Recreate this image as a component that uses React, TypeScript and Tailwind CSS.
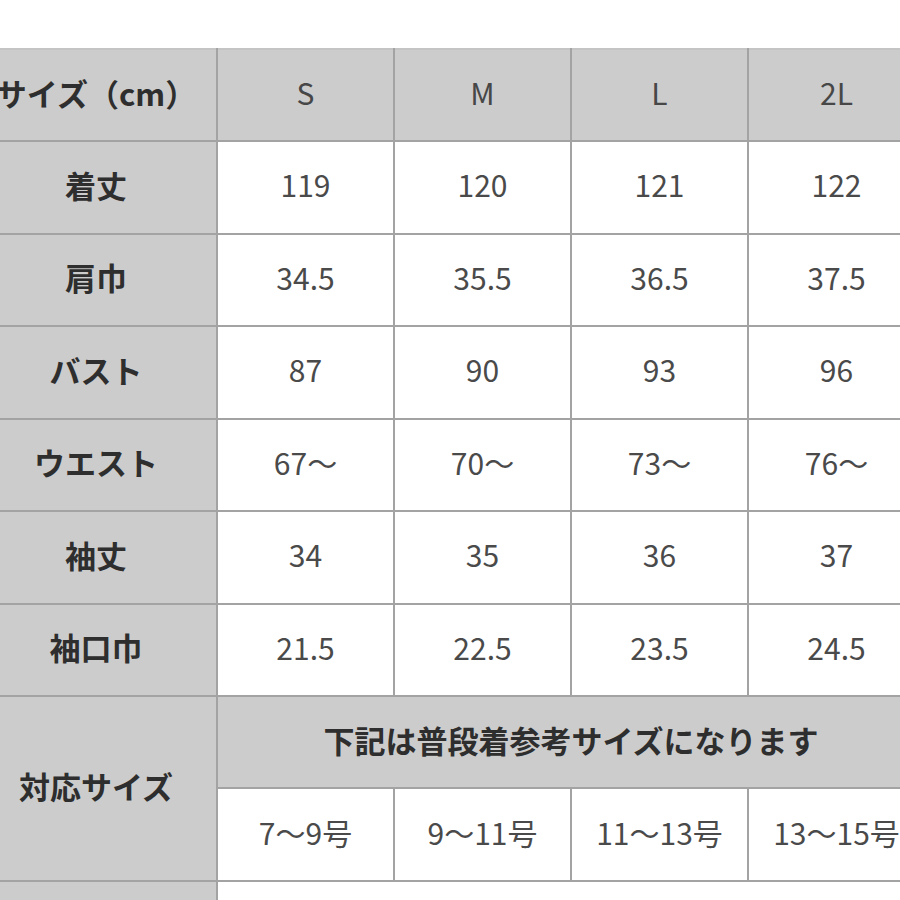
import React from "react";

// size chart rows
const sizes = ["S", "M", "L", "2L"];

const rows: { label: string; values: string[] }[] = [
    { label: "着丈", values: ["119", "120", "121", "122"] },
    { label: "肩巾", values: ["34.5", "35.5", "36.5", "37.5"] },
    { label: "バスト", values: ["87", "90", "93", "96"] },
    { label: "ウエスト", values: ["67〜", "70〜", "73〜", "76〜"] },
    { label: "袖丈", values: ["34", "35", "36", "37"] },
    { label: "袖口巾", values: ["21.5", "22.5", "23.5", "24.5"] },
];

const fits = ["7〜9号", "9〜11号", "11〜13号", "13〜15号"];

const cell = "border-2 border-[#a3a3a3] text-center align-middle p-0 pb-[6px]";
const labelCell = `${cell} bg-[#cccccc] font-bold text-[31px] text-[#2e2e2e]`;
const valueCell = `${cell} bg-white font-normal text-[#4a4a4a]`;

export default function App() {
    return (
        <div
            className="w-[900px] h-[900px] overflow-hidden bg-white"
            style={{ fontFamily: '"Noto Sans CJK JP", "Noto Sans", sans-serif' }}
        >
            <table className="table-fixed border-collapse w-[950px] ml-[-26px] mt-[48px] text-[30px] leading-none">
                <colgroup>
                    <col className="w-[242px]" />
                    <col className="w-[177px]" />
                    <col className="w-[177px]" />
                    <col className="w-[177px]" />
                    <col className="w-[177px]" />
                </colgroup>
                <tbody>
                    <tr className="h-[92px]">
                        <td className={`${labelCell} border-t-[#c4c4c4]`}>サイズ（cm）</td>
                        {sizes.map((s) => (
                            <td key={s} className={`${cell} bg-[#cccccc] border-t-[#c4c4c4] font-normal text-[#474747]`}>
                                {s}
                            </td>
                        ))}
                    </tr>
                    {rows.map((row) => (
                        <tr key={row.label} className="h-[92.5px]">
                            <td className={labelCell}>{row.label}</td>
                            {row.values.map((v, i) => (
                                <td key={i} className={valueCell}>
                                    {v}
                                </td>
                            ))}
                        </tr>
                    ))}
                    <tr className="h-[92px]">
                        <td rowSpan={2} className={labelCell}>
                            対応サイズ
                        </td>
                        <td colSpan={4} className={labelCell}>
                            下記は普段着参考サイズになります
                        </td>
                    </tr>
                    <tr className="h-[93px]">
                        {fits.map((f) => (
                            <td key={f} className={valueCell}>
                                {f}
                            </td>
                        ))}
                    </tr>
                    <tr className="h-[20px]">
                        <td className={`${cell} bg-[#cccccc]`}></td>
                        <td colSpan={4} className={`${cell} bg-white`}></td>
                    </tr>
                </tbody>
            </table>
        </div>
    );
}
